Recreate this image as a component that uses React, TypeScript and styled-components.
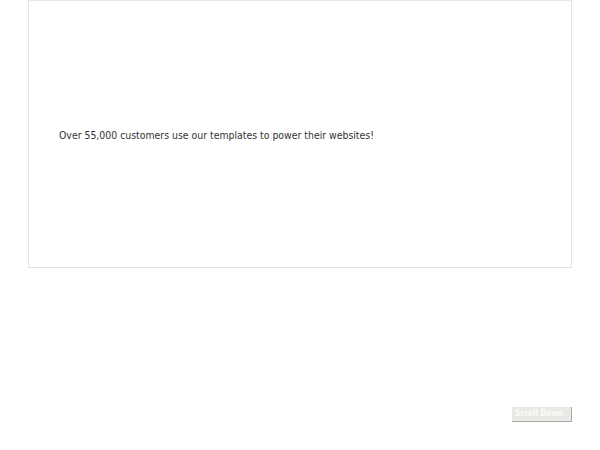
import React from "react";
import styled, { createGlobalStyle } from "styled-components";

const GlobalStyle = createGlobalStyle`
  body {
    margin: 0;
    background: #fff;
    font-family: "DejaVu Sans", sans-serif;
  }
`;

const Page = styled.div`
  width: 600px;
  height: 450px;
  display: flex;
  flex-direction: column;
`;

const Slide = styled.section`
  margin: 0 28px;
  height: 268px;
  box-sizing: border-box;
  border: 1px solid #e3e3e3;
  border-top-color: #e8e8e8;
  display: flex;
  align-items: center;
  padding: 3px 30px 0;
`;

/* the source text renders horizontally squeezed */
const Caption = styled.p`
  margin: 0;
  font-size: 11px;
  color: #333;
  white-space: nowrap;
  transform: scaleX(0.85);
  transform-origin: left center;
`;

const Footer = styled.div`
  flex: 1;
  display: flex;
  justify-content: flex-end;
  align-items: flex-end;
  padding: 0 28px 28px;
`;

const ScrollButton = styled.button`
  width: 60px;
  height: 15px;
  padding: 0 0 0 3px;
  border: 0;
  border-right: 1px solid #a9a9a9;
  border-bottom: 1px solid #a9a9a9;
  background: #ebe9e6;
  color: #fbfaf9;
  font-family: "DejaVu Sans Condensed", "DejaVu Sans", sans-serif;
  font-weight: bold;
  font-size: 8px;
  line-height: 14px;
  text-align: left;
  white-space: nowrap;
  overflow: hidden;
`;

export default function App() {
  return (
    <Page>
      <GlobalStyle />
      <Slide>
        <Caption>Over 55,000 customers use our templates to power their websites!</Caption>
      </Slide>
      <Footer>
        <ScrollButton>Scroll Down</ScrollButton>
      </Footer>
    </Page>
  );
}
